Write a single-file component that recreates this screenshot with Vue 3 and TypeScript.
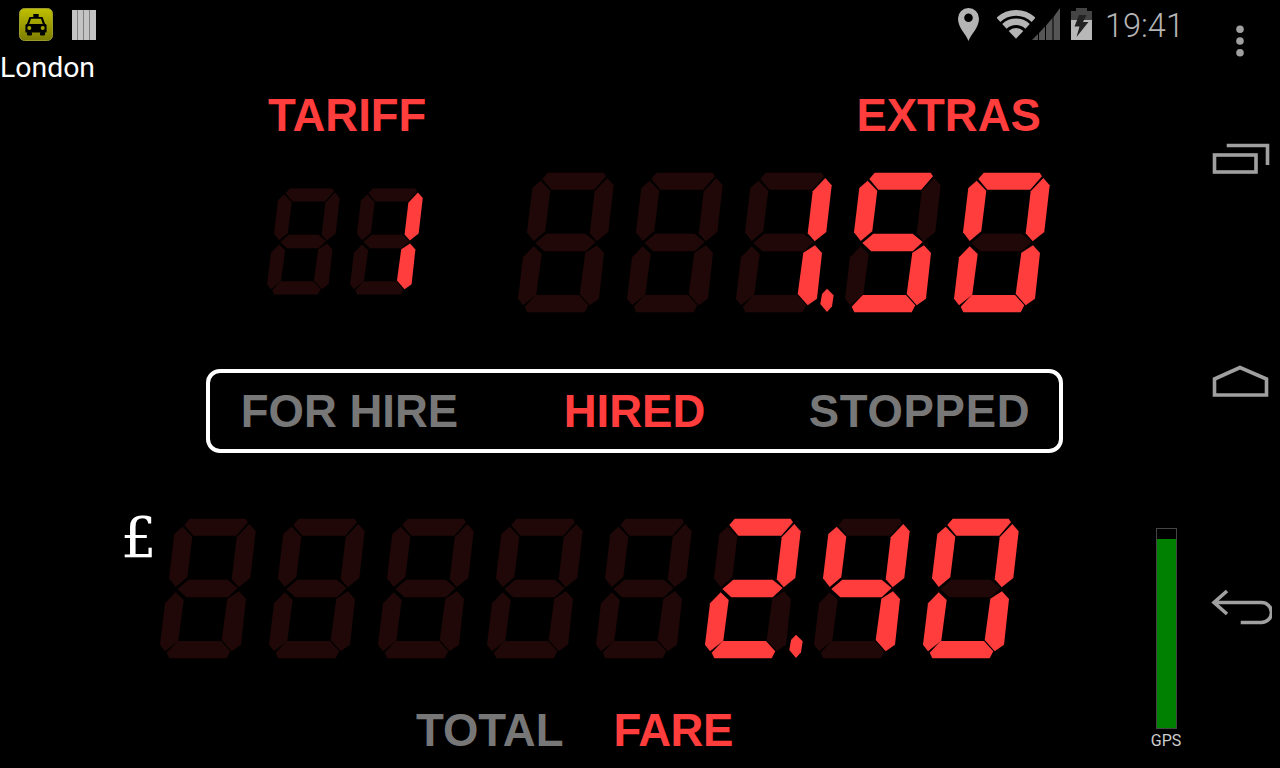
<script setup lang="ts">
// segment shapes for a 109 wide cell, big digit takes 97x141 of it
const SEGMENTS: Record<string, string> = {
    a: '24.3,7 29.7,0.7 85.7,0.7 88,4.3 76.3,17.7 33.3,17.7',
    b: '89.3,6 95.7,13.3 90.3,60 78.7,69.3 71.7,61.3 76.7,19.3',
    c: '79,73.3 86,81 81,126.7 71.7,133.3 61.7,122 67.3,80.7',
    d: '6.7,134.7 17.7,123 61,123 70.3,133.3 66.7,140.3 9.3,140.3',
    e: '15.7,74.3 23.7,82 18.3,122.7 5,133.3 0,126.7 5,85.3',
    f: '22.7,8.7 32.3,18.7 27.3,59.3 15.7,69 9,60.3 14.3,16',
    g: '17.3,71 28.3,61.7 67.7,61.7 77.7,70 67.7,79.3 26.3,79.3',
};
const DOT = '91,116.7 97.7,123.3 96,134.3 91,140 84.3,132 86,122';

const LIT: Record<string, string> = {
    ' ': '',
    '0': 'abcdef',
    '1': 'bc',
    '2': 'abdeg',
    '4': 'bcfg',
    '5': 'acdfg',
};

const segmentNames = Object.keys(SEGMENTS);

// "1." -> one cell with the dot on
function cells(text: string) {
    const out: { ch: string; dot: boolean }[] = [];
    for (const ch of text) {
        if (ch === '.') out[out.length - 1].dot = true;
        else out.push({ ch, dot: false });
    }
    return out;
}

const tariff = cells(' 1');
const extras = cells('  1.50');
const fare = cells('     2.40');

const isLit = (ch: string, seg: string) => LIT[ch].includes(seg);
</script>

<template>
    <div class="screen">
        <div class="main">
            <header class="status-bar">
                <svg class="app-icon" width="34" height="33" viewBox="0 0 34 33">
                    <defs>
                        <linearGradient id="cab" x1="0" y1="0" x2="0" y2="1">
                            <stop offset="0" stop-color="#c0c000" />
                            <stop offset="1" stop-color="#7c7c00" />
                        </linearGradient>
                    </defs>
                    <rect x="0.5" y="0.5" width="33" height="32" rx="5" fill="url(#cab)" stroke="#9a9a30" />
                    <rect x="14.3" y="6" width="5.4" height="3" fill="#000" />
                    <path d="M10.5 9 H23.5 L26.5 17 H7.5 Z M12 10.8 L10.2 16 H23.8 L22 10.8 Z" fill="#000" fill-rule="evenodd" />
                    <path d="M7.5 16 H26.5 Q27.6 16 27.6 17.5 V24.5 H6.4 V17.5 Q6.4 16 7.5 16 Z" fill="#000" />
                    <circle cx="10.3" cy="20" r="2" fill="#a4a400" />
                    <circle cx="23.7" cy="20" r="2" fill="#a4a400" />
                    <rect x="8" y="24" width="5" height="3.6" rx="1" fill="#000" />
                    <rect x="21" y="24" width="5" height="3.6" rx="1" fill="#000" />
                </svg>
                <svg class="tally-icon" width="24" height="30" viewBox="0 0 24 30">
                    <rect width="24" height="30" fill="#808080" />
                    <rect x="0" y="0" width="5" height="30" fill="#c4c4c4" />
                    <rect x="6" y="0" width="5" height="30" fill="#c4c4c4" />
                    <rect x="12" y="0" width="5" height="30" fill="#c4c4c4" />
                    <rect x="18" y="0" width="6" height="30" fill="#c4c4c4" />
                </svg>
                <span class="spacer"></span>
                <svg class="pin" width="21" height="33" viewBox="0 0 21 33">
                    <path d="M10.5 33 C8 26 0 20 0 10.5 A10.5 10.5 0 0 1 21 10.5 C21 20 13 26 10.5 33 Z M10.5 5.5 A4.3 4.3 0 1 0 10.5 14.1 A4.3 4.3 0 1 0 10.5 5.5 Z" fill="#b4b4b4" fill-rule="evenodd" />
                </svg>
                <svg class="wifi" width="38" height="30" viewBox="0 0 38 30">
                    <path d="M19 29.7 L11.7 21.9 A10.7 10.7 0 0 1 26.3 21.9 Z" fill="#b4b4b4" />
                    <path d="M7.4 17.3 A17 17 0 0 1 30.6 17.3" fill="none" stroke="#b4b4b4" stroke-width="6.5" />
                    <path d="M1.4 10.8 A25.85 25.85 0 0 1 36.6 10.8" fill="none" stroke="#b4b4b4" stroke-width="5.7" />
                </svg>
                <svg class="signal" width="28" height="32" viewBox="0 0 28 32">
                    <polygon points="0,32 6,26 6,32" fill="#555" />
                    <polygon points="7,25 13,18.5 13,32 7,32" fill="#555" />
                    <polygon points="14,17.5 20.5,10 20.5,32 14,32" fill="#555" />
                    <polygon points="21.5,9 28,0 28,32 21.5,32" fill="#555" />
                </svg>
                <svg class="battery" width="21" height="32" viewBox="0 0 21 32">
                    <path d="M5 0 H16 V3 H21 V12 H0 V3 H5 Z" fill="#444" />
                    <rect x="0" y="12" width="21" height="20" fill="#b8b8b8" />
                    <polygon points="8,7 15.5,7 12,14 17.5,14 5.5,29 8.5,18.5 3.5,18.5" fill="#222" />
                </svg>
                <span class="clock">19:41</span>
            </header>

            <div class="app-title">London</div>

            <div class="meter-labels">
                <span class="label lit tariff-label">TARIFF</span>
                <span class="label lit extras-label">EXTRAS</span>
            </div>

            <div class="meters">
                <div class="digits tariff">
                    <svg v-for="(cell, i) in tariff" :key="i" class="digit small" viewBox="0 0 109 141">
                        <polygon
                            v-for="seg in segmentNames"
                            :key="seg"
                            :points="SEGMENTS[seg]"
                            :class="isLit(cell.ch, seg) ? 'on' : 'off'"
                        />
                    </svg>
                </div>
                <div class="digits extras">
                    <svg v-for="(cell, i) in extras" :key="i" class="digit" viewBox="0 0 109 141">
                        <polygon
                            v-for="seg in segmentNames"
                            :key="seg"
                            :points="SEGMENTS[seg]"
                            :class="isLit(cell.ch, seg) ? 'on' : 'off'"
                        />
                        <polygon v-if="cell.dot" :points="DOT" class="on" />
                    </svg>
                </div>
            </div>

            <div class="hire-box">
                <span class="label dim">FOR HIRE</span>
                <span class="label lit">HIRED</span>
                <span class="label dim stopped">STOPPED</span>
            </div>

            <div class="lower">
                <div class="fare-col">
                    <div class="fare-row">
                        <span class="pound">£</span>
                        <div class="digits">
                            <svg v-for="(cell, i) in fare" :key="i" class="digit" viewBox="0 0 109 141">
                                <polygon
                                    v-for="seg in segmentNames"
                                    :key="seg"
                                    :points="SEGMENTS[seg]"
                                    :class="isLit(cell.ch, seg) ? 'on' : 'off'"
                                />
                                <polygon v-if="cell.dot" :points="DOT" class="on" />
                            </svg>
                        </div>
                    </div>
                    <div class="fare-labels">
                        <span class="label dim">TOTAL</span>
                        <span class="label lit fare-word">FARE</span>
                    </div>
                </div>
                <div class="gps">
                    <div class="gps-bar"><div class="gps-fill" :style="{ height: '95%' }"></div></div>
                    <span class="gps-text">GPS</span>
                </div>
            </div>
        </div>

        <nav class="nav">
            <svg class="overflow" width="16" height="34" viewBox="0 0 16 34">
                <circle cx="8" cy="5.3" r="3.8" />
                <circle cx="8" cy="17" r="3.8" />
                <circle cx="8" cy="28.7" r="3.8" />
            </svg>
            <div class="nav-btn">
                <svg width="64" height="64" viewBox="0 0 64 64">
                    <rect x="6.5" y="27" width="41.5" height="17" />
                    <path d="M18.7 17.5 H59.5 V37" />
                </svg>
            </div>
            <div class="nav-btn">
                <svg width="64" height="64" viewBox="0 0 64 64">
                    <path d="M6.5 27 L32 15.5 L58.5 27 V43 H6.5 Z" />
                </svg>
            </div>
            <div class="nav-btn">
                <svg width="64" height="64" viewBox="0 0 64 64">
                    <path d="M19 15 L6 26.5 L19 38 M6 26.5 H53.5 A10 10 0 0 1 53.5 46.5 H32.7" />
                </svg>
            </div>
        </nav>
    </div>
</template>

<style scoped>
.screen {
    display: flex;
    width: 1280px;
    height: 768px;
    overflow: hidden;
    background: #000;
    font-family: "Liberation Sans", Arial, sans-serif;
}

.main {
    flex: 1;
    min-width: 0;
    display: flex;
    flex-direction: column;
}

.status-bar {
    height: 48px;
    padding: 0 16px 0 19px;
    display: flex;
    align-items: flex-start;
    flex-shrink: 0;
}

.app-icon {
    margin-top: 8px;
}

.tally-icon {
    margin: 10px 0 0 19px;
}

.spacer {
    flex: 1;
}

.pin {
    margin-top: 8px;
}

.wifi {
    margin: 9px 0 0 18px;
}

.signal {
    margin: 8px 0 0 -3px;
}

.battery {
    margin: 8px 0 0 11px;
}

.clock {
    margin-left: 13px;
    font-family: Roboto, sans-serif;
    font-weight: 300;
    font-size: 32.6px;
    line-height: 52px;
    color: #b4b4b4;
}

.app-title {
    height: 40px;
    font-family: Roboto, sans-serif;
    font-size: 28.4px;
    line-height: 40px;
    color: #fff;
}

.label {
    font-weight: 700;
    font-size: 45.5px;
    line-height: 52px;
}

.lit {
    color: #ff3d3d;
}

.dim {
    color: #777;
}

.stopped {
    letter-spacing: 0.7px;
}

.fare-word {
    letter-spacing: -0.5px;
}

.meter-labels {
    display: flex;
    margin-top: 2px;
    height: 52px;
}

.tariff-label {
    margin-left: 268px;
}

.extras-label {
    margin-left: 430px;
}

.meters {
    display: flex;
    align-items: flex-start;
    margin-top: 30px;
}

.digits {
    display: flex;
}

.tariff {
    margin: 16px 0 0 267px;
}

.extras {
    margin-left: 85px;
}

.digit {
    display: block;
    flex-shrink: 0;
    width: 109px;
    height: 141px;
}

.digit.small {
    width: 83px;
    height: 107px;
}

.on {
    fill: #ff3d3d;
}

.off {
    fill: #200808;
}

.hire-box {
    display: grid;
    grid-template-columns: repeat(3, 285px);
    justify-content: center;
    box-sizing: border-box;
    width: 857px;
    height: 84px;
    margin: 56px 0 0 206px;
    padding-top: 2px;
    border: 4px solid #fff;
    border-radius: 14px;
    align-items: center;
    justify-items: center;
}

.lower {
    display: flex;
    flex: 1;
    min-height: 0;
}

.fare-col {
    flex: 1;
    min-width: 0;
}

.fare-row {
    display: flex;
    margin: 65px 0 0 121px;
}

.pound {
    width: 39px;
    flex-shrink: 0;
    font-family: "DejaVu Serif", serif;
    font-size: 56px;
    line-height: 40px;
    color: #fff;
}

.fare-labels {
    display: flex;
    gap: 50px;
    margin: 46px 0 0 416px;
}

.gps {
    width: 60px;
    margin: 75px 4px 0 0;
    display: flex;
    flex-direction: column;
    align-items: center;
}

.gps-bar {
    box-sizing: border-box;
    flex-shrink: 0;
    width: 21px;
    height: 201px;
    border: 1px solid #444;
    display: flex;
    align-items: flex-end;
}

.gps-fill {
    width: 100%;
    background: #008000;
}

.gps-text {
    font-family: Roboto, sans-serif;
    font-size: 16px;
    line-height: 24px;
    color: #ccc;
}

.nav {
    width: 80px;
    flex-shrink: 0;
    display: flex;
    flex-direction: column;
    align-items: center;
}

.overflow {
    display: block;
    margin: 24px 0 -10px;
    fill: #a0a0a0;
}

.nav-btn {
    height: 224px;
    display: flex;
    align-items: center;
    justify-content: center;
}

.nav-btn svg {
    fill: none;
    stroke: #a0a0a0;
    stroke-width: 3.6;
}
</style>

<style>
html,
body {
    background: #000;
}
</style>
